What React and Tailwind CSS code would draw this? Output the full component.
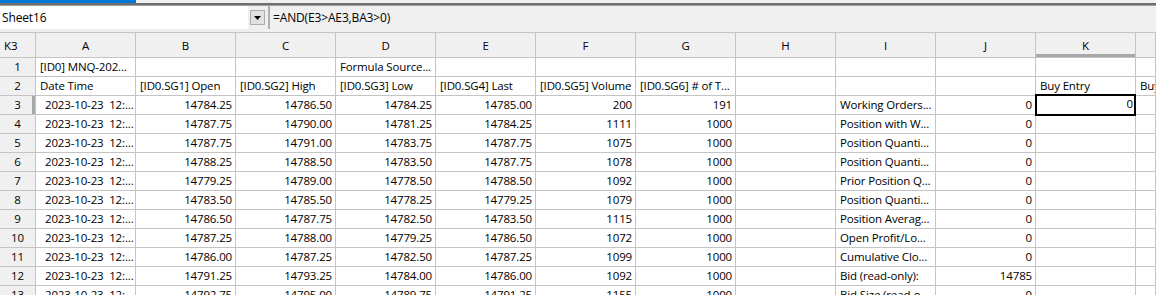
import React from 'react';

const cols = ['A', 'B', 'C', 'D', 'E', 'F', 'G', 'H', 'I', 'J', 'K', ''];

const data = [
	['14784.25', '14786.50', '14784.25', '14785.00', '200', '191', 'Working Orders...', '0', '0'],
	['14787.75', '14790.00', '14781.25', '14784.25', '1111', '1000', 'Position with W...', '0'],
	['14787.75', '14791.00', '14783.75', '14787.75', '1075', '1000', 'Position Quanti...', '0'],
	['14788.25', '14788.50', '14783.50', '14787.75', '1078', '1000', 'Position Quanti...', '0'],
	['14779.25', '14789.00', '14778.50', '14788.50', '1092', '1000', 'Prior Position Q...', '0'],
	['14783.50', '14785.50', '14778.25', '14779.25', '1079', '1000', 'Position Quanti...', '0'],
	['14786.50', '14787.75', '14782.50', '14783.50', '1115', '1000', 'Position Averag...', '0'],
	['14787.25', '14788.00', '14779.25', '14786.50', '1072', '1000', 'Open Profit/Lo...', '0'],
	['14786.00', '14787.25', '14782.50', '14787.25', '1099', '1000', 'Cumulative Clo...', '0'],
	['14791.25', '14793.25', '14784.00', '14786.00', '1092', '1000', 'Bid (read-only):', '14785'],
	['14792.75', '14795.00', '14789.75', '14791.25', '1155', '1000', 'Bid Size (read-o...', '0'],
];

const Cell = ({ children, right, className = '' }) => (
	<div
		className={`h-[19px] border-r border-b border-[#c4c4c4] bg-white overflow-hidden whitespace-pre leading-[18px] ${
			right ? 'text-right pr-[3px]' : 'pl-[4px]'
		} ${className}`}
	>
		{children}
	</div>
);

const RowHead = ({ n, active }) => (
	<div
		className={`h-[19px] border-r border-b border-[#c4c4c4] bg-[#f0f0f0] text-center leading-[18px] ${
			active ? 'shadow-[inset_-3px_0_0_#a8a8a8]' : ''
		}`}
	>
		{n}
	</div>
);

const App = () => {
	return (
		<div
			className="w-[1156px] h-[295px] overflow-hidden bg-[#f0f0f0] text-[11.5px] tracking-[-0.15px] text-black"
			style={{ fontFamily: '"Open Sans", "Noto Sans", sans-serif' }}
		>
			<div className="h-[3px] w-[136px] bg-[#0078d7]" />
			<div className="h-[3px] bg-[#6e6e6e] border-b border-[#a0a0a0]" />

			{/* name box + formula bar */}
			<div className="flex h-[23px] items-stretch text-[12px]">
				<div className="w-[248px] bg-white pl-[2px] leading-[23px]">Sheet16</div>
				<div className="flex w-[18px] items-center justify-center">
					<div className="flex h-[15px] w-[15px] items-center justify-center border border-[#adadad] bg-[#e1e1e1]">
						<svg width="7" height="4" viewBox="0 0 7 4">
							<path d="M0 0h7L3.5 4z" fill="#000" />
						</svg>
					</div>
				</div>
				<div className="ml-[2px] w-[2px] border-x border-[#b0b0b0] bg-white" />
				<div className="flex-1 pl-[3px] leading-[23px]">=AND(E3&gt;AE3,BA3&gt;0)</div>
			</div>

			{/* sheet */}
			<div className="mt-[3px] grid grid-cols-[36px_repeat(11,100px)_20px] border-t border-[#c4c4c4]">
				<div className="h-[25px] border-r border-b border-[#c4c4c4] bg-[#f0f0f0] pl-[4px] leading-[25px]">K3</div>
				{cols.map((c, i) => (
					<div
						key={i}
						className={`h-[25px] border-r border-b border-[#c4c4c4] bg-[#f0f0f0] text-center leading-[25px] ${
							c === 'K' ? 'shadow-[inset_0_-3px_0_#a8a8a8]' : ''
						}`}
					>
						{c}
					</div>
				))}

				<RowHead n={1} />
				<Cell>[ID0] MNQ-202...</Cell>
				<Cell />
				<Cell />
				<Cell>Formula Source...</Cell>
				<Cell />
				<Cell />
				<Cell />
				<Cell />
				<Cell />
				<Cell />
				<Cell />
				<Cell />

				<RowHead n={2} />
				<Cell>Date Time</Cell>
				<Cell>[ID0.SG1] Open</Cell>
				<Cell>[ID0.SG2] High</Cell>
				<Cell>[ID0.SG3] Low</Cell>
				<Cell>[ID0.SG4] Last</Cell>
				<Cell>[ID0.SG5] Volume</Cell>
				<Cell>[ID0.SG6] # of T...</Cell>
				<Cell />
				<Cell />
				<Cell />
				<Cell>Buy Entry</Cell>
				<Cell>Buy</Cell>

				{data.map((r, i) => (
					<React.Fragment key={i}>
						<RowHead n={i + 3} active={i === 0} />
						<Cell className="pl-[9px]">2023-10-23  12:...</Cell>
						{r.slice(0, 6).map((v, j) => (
							<Cell key={j} right>
								{v}
							</Cell>
						))}
						<Cell />
						<Cell>{r[6]}</Cell>
						<Cell right>{r[7]}</Cell>
						{i === 0 ? (
							<div className="relative h-[19px] border-r border-b border-[#c4c4c4] bg-white">
								<div className="absolute -top-[2px] -left-[1px] right-[-1px] bottom-[-2px] border-2 border-black pr-[1px] text-right leading-[16px]">
									0
								</div>
							</div>
						) : (
							<Cell />
						)}
						<Cell />
					</React.Fragment>
				))}
			</div>
		</div>
	);
};

export default App;
